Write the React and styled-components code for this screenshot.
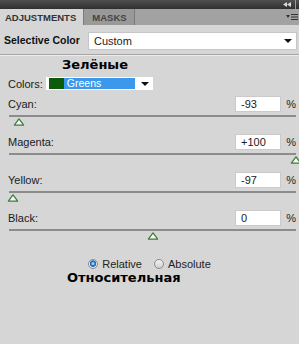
import React from "react";
import styled, { createGlobalStyle } from "styled-components";

const GlobalStyle = createGlobalStyle`
  html, body {
    margin: 0;
    padding: 0;
    background: #d6d6d6;
  }
`;

const sliders = [
  { name: "Cyan", value: "-93", num: -93 },
  { name: "Magenta", value: "+100", num: 100 },
  { name: "Yellow", value: "-97", num: -97 },
  { name: "Black", value: "0", num: 0 },
];

const Panel = styled.div`
  width: 299px;
  height: 344px;
  background: #d6d6d6;
  font-family: "Liberation Sans", Tahoma, sans-serif;
  color: #1a1a1a;
  overflow: hidden;
`;

const TopBar = styled.div`
  height: 9px;
  background: linear-gradient(#505050, #2f2f2f);
  display: flex;
  justify-content: flex-end;
  align-items: center;
  gap: 4px;
  padding-right: 3px;
`;

const BarDivider = styled.span`
  width: 1px;
  height: 9px;
  background: #9a9a9a;
`;

const TabRow = styled.div`
  height: 16px;
  background: #a2a2a2;
  display: flex;
  align-items: stretch;
`;

const Tab = styled.div`
  display: flex;
  align-items: center;
  padding: ${(p) => (p.$active ? "0 7px 0 5px" : "0 7px 0 8px")};
  font-size: 9.5px;
  font-weight: bold;
  color: ${(p) => (p.$active ? "#333" : "#444")};
  background: ${(p) => (p.$active ? "#d6d6d6" : "#999")};
  border-right: 1px solid #7a7a7a;
`;

const MenuButton = styled.div`
  margin-left: auto;
  display: flex;
  align-items: center;
  padding-right: 1px;
`;

const HeaderRow = styled.div`
  height: 29px;
  display: flex;
  align-items: center;
  padding: 0 2px 0 4px;
  border-bottom: 1px solid #a6a6a6;
  box-shadow: 0 1px 0 #ececec;
`;

const HeaderLabel = styled.div`
  width: 84px;
  font-size: 10.5px;
  font-weight: bold;
  color: #111;
`;

const Select = styled.div`
  flex: 1;
  height: 18px;
  margin-top: 2px;
  background: #fff;
  border: 1px solid #c6c6c6;
  box-sizing: border-box;
  display: flex;
  align-items: center;
  padding: 0 4px 0 5px;
  font-size: 11px;
  color: #222;
`;

const Arrow = styled.span`
  margin-left: auto;
  width: 0;
  height: 0;
  border-left: 4px solid transparent;
  border-right: 4px solid transparent;
  border-top: 4px solid #111;
`;

const Caption = styled.div`
  padding-left: ${(p) => p.$left}px;
  margin-top: ${(p) => p.$top}px;
  height: 14px;
  line-height: 14px;
  font-family: "DejaVu Sans", Verdana, sans-serif;
  font-weight: bold;
  font-size: 13px;
  color: #000;
`;

const ColorsRow = styled.div`
  margin-top: 5px;
  padding-left: 8px;
  display: flex;
  align-items: center;
  height: 13px;
  font-size: 11px;
`;

const ColorsPicker = styled.div`
  margin-left: 3px;
  width: 107px;
  height: 13px;
  background: #fff;
  display: flex;
  align-items: center;
  padding: 0 4px 0 3px;
  box-sizing: border-box;
`;

const Swatch = styled.span`
  width: 15px;
  height: 11px;
  background: #0b5b0b;
`;

const Highlight = styled.span`
  width: 71px;
  height: 11px;
  background: #3b98ec;
  color: #fff;
  font-size: 10.5px;
  line-height: 11px;
  padding-left: 3px;
  box-sizing: border-box;
`;

const SliderList = styled.div`
  margin-top: 6px;
  padding: 0 3px 0 8px;
`;

const Group = styled.div`
  height: 38px;
`;

const SliderRow = styled.div`
  height: 16px;
  display: flex;
  align-items: center;
  font-size: 11px;
`;

const ValueBox = styled.div`
  margin-left: auto;
  width: 46px;
  height: 16px;
  box-sizing: border-box;
  background: #fff;
  border: 1px solid #cacaca;
  font-size: 11px;
  line-height: 14px;
  padding-left: 5px;
`;

const Percent = styled.span`
  width: 15px;
  text-align: right;
  font-size: 11px;
  color: #222;
`;

const Track = styled.div`
  position: relative;
  margin: 3px 0 0 1px;
  height: 2px;
  background: #8c8c8c;
`;

const Thumb = styled.svg`
  position: absolute;
  top: 3px;
  transform: translateX(-50%);
`;

const RadioRow = styled.div`
  margin-top: 10px;
  height: 12px;
  display: flex;
  justify-content: center;
  gap: 12px;
  font-size: 11px;
`;

const RadioOption = styled.label`
  display: flex;
  align-items: center;
  gap: 4px;
  color: #222;
`;

const RadioDot = styled.span`
  width: 10px;
  height: 10px;
  box-sizing: border-box;
  border-radius: 50%;
  border: 1px solid #8a8a8a;
  background: ${(p) =>
    p.$on
      ? "radial-gradient(circle at 50% 45%, #8fd0ff 0 1px, #1d6fb8 2px 3px, #e6e6e6 3.5px)"
      : "linear-gradient(#f4f4f4, #cfcfcf)"};
`;

const Slider = ({ name, value, num }) => (
  <Group>
    <SliderRow>
      {name}:
      <ValueBox>{value}</ValueBox>
      <Percent>%</Percent>
    </SliderRow>
    <Track>
      <Thumb
        width="11"
        height="8"
        viewBox="0 0 11 8"
        style={{ left: `${((num + 100) / 200) * 100}%` }}
      >
        <path
          d="M5.5 0.8 L10.2 7.2 L0.8 7.2 Z"
          fill="#f2f8f2"
          stroke="#3c7a3c"
          strokeWidth="1.2"
          strokeLinejoin="round"
        />
      </Thumb>
    </Track>
  </Group>
);

const App = () => (
  <>
    <GlobalStyle />
    <Panel>
      <TopBar>
        <svg width="8" height="5" viewBox="0 0 8 5">
          <path d="M4 0 L0 2.5 L4 5 Z M8 0 L4 2.5 L8 5 Z" fill="#d8d8d8" />
        </svg>
        <BarDivider />
      </TopBar>
      <TabRow>
        <Tab $active>ADJUSTMENTS</Tab>
        <Tab>MASKS</Tab>
        <MenuButton>
          <svg width="12" height="8" viewBox="0 0 12 8">
            <path d="M0 2 L4 2 L2 5 Z" fill="#333" />
            <path d="M5 1.5 H12 M5 4 H12 M5 6.5 H12" stroke="#333" strokeWidth="1" />
          </svg>
        </MenuButton>
      </TabRow>
      <HeaderRow>
        <HeaderLabel>Selective Color</HeaderLabel>
        <Select>
          Custom
          <Arrow />
        </Select>
      </HeaderRow>
      <Caption $left={62} $top={3}>Зелёные</Caption>
      <ColorsRow>
        Colors:
        <ColorsPicker>
          <Swatch />
          <Highlight>Greens</Highlight>
          <Arrow />
        </ColorsPicker>
      </ColorsRow>
      <SliderList>
        {sliders.map((s) => (
          <Slider key={s.name} {...s} />
        ))}
      </SliderList>
      <RadioRow>
        <RadioOption>
          <RadioDot $on />
          Relative
        </RadioOption>
        <RadioOption>
          <RadioDot />
          Absolute
        </RadioOption>
      </RadioRow>
      <Caption $left={67} $top={1}>Относительная</Caption>
    </Panel>
  </>
);

export default App;
